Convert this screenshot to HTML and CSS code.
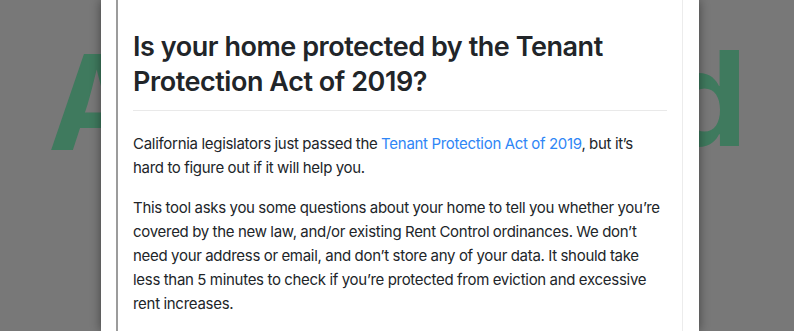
FILE: index.html
```html
<!DOCTYPE html>
<html lang="en">
<head>
<meta charset="utf-8">
<title>Am I Protected?</title>
<link rel="stylesheet" href="styles.css">
</head>
<body>
<div class="page-bg" aria-hidden="true">
  <span class="bg-letter bg-a">A</span>
  <span class="bg-letter bg-d">d</span>
</div>
<div class="overlay">
  <div class="modal">
    <div class="modal-inner">
      <h2 class="title">Is your home protected by the Tenant Protection Act of 2019?</h2>
      <hr class="divider">
      <p class="para">California legislators just passed the <a class="link" href="#">Tenant Protection Act of 2019</a>, but it’s hard to figure out if it will help you.</p>
      <p class="para">This tool asks you some questions about your home to tell you whether you’re covered by the new law, and/or existing Rent Control ordinances. We don’t need your address or email, and don’t store any of your data. It should take less than 5 minutes to check if you’re protected from eviction and excessive rent increases.</p>
    </div>
  </div>
</div>
</body>
</html>
```
FILE: styles.css
```css
html, body {
  margin: 0;
  padding: 0;
  height: 100%;
  overflow: hidden;
}
body {
  background: #787878;
  font-family: Inter, "Noto Sans", sans-serif;
  color: #212529;
  position: relative;
}
.page-bg {
  position: absolute;
  inset: 0;
}
.bg-letter {
  position: absolute;
  font-family: Inter, sans-serif;
  font-weight: 700;
  font-size: 132px;
  line-height: 1;
  color: #3f7a5e;
}
.bg-a {
  left: 48px;
  top: 36px;
}
.bg-d {
  left: 664px;
  top: 32px;
}
.overlay {
  position: relative;
  display: flex;
  padding-left: 101px;
  height: 100%;
}
.modal {
  width: 598px;
  box-sizing: border-box;
  background: #fff;
  padding: 0 16px 0 15px;
  box-shadow: 0 0 10px rgba(0, 0, 0, 0.45);
  height: 100%;
}
.modal-inner {
  border-left: 2px solid #9c9c9c;
  border-right: 1px solid #ececec;
  padding: 29px 15px 0;
  height: 100%;
  box-sizing: border-box;
}
.title {
  margin: 0 0 11px;
  font-size: 27px;
  line-height: 35px;
  font-weight: 600;
  letter-spacing: -0.45px;
  color: #212529;
}
.divider {
  margin: 0 0 21px;
  border: 0;
  border-top: 1px solid #e9e9e9;
}
.para {
  margin: 0 0 16px;
  font-size: 15px;
  line-height: 24px;
  letter-spacing: -0.28px;
  word-spacing: -0.3px;
}
.link {
  color: #2f86f6;
  text-decoration: none;
}
```
